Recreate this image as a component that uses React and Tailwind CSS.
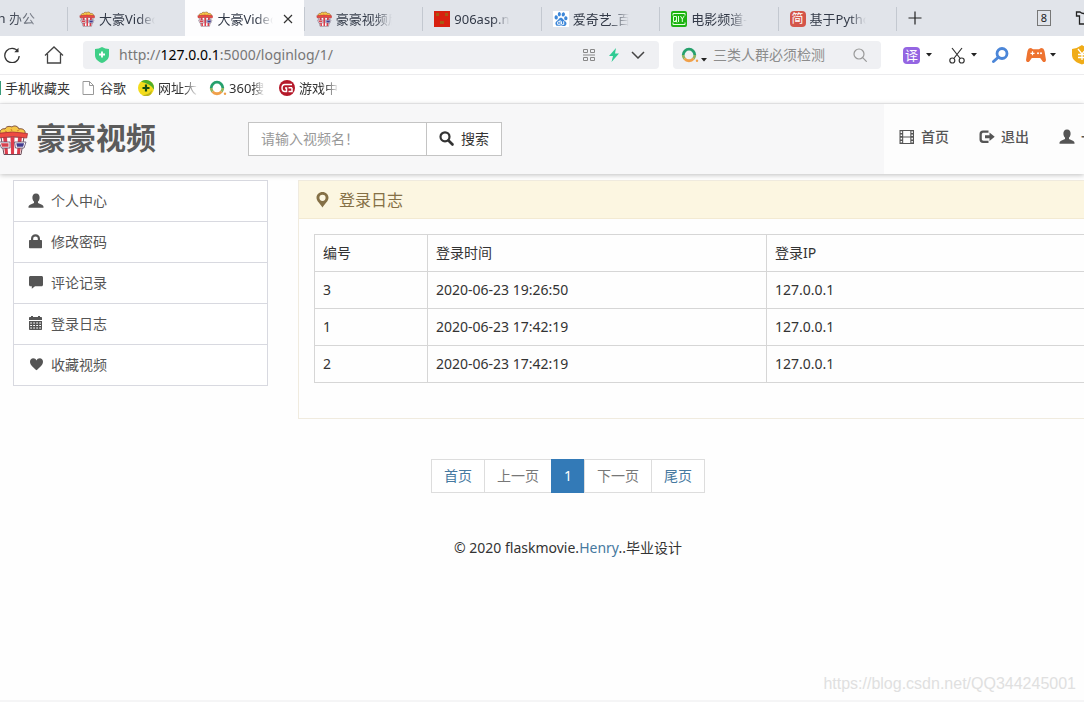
import React from "react";
import { SiBaidu } from "react-icons/si";

function Popcorn({ className }) {
  return (
    <svg viewBox="0 0 32 32" className={className} aria-hidden="true">
      <path d="M4 10C3 6 7 4 9 5c1-3 5-3 7-2 2-2 6-1 7 2 3-1 7 1 6 5z" fill="#f5c648" stroke="#7c4a35" strokeWidth="1" />
      <path d="M9 7l2 1M15 5l1 2M21 7l2-1M13 9l2-1" stroke="#d08b2c" strokeWidth="1.2" fill="none" />
      <path d="M5 13h23l-3 17.5H8z" fill="#fff" stroke="#6b4b58" strokeWidth="1" />
      <path d="M7 13h4l1 17H9zM14.500 13h4l-.5 17h-3zM22 13h4l-2 17h-3z" fill="#dc3d4c" />
      <path d="M1.500 9.500q15-3 30 0l-.8 4.500q-14-3-28.400 0z" fill="#ee4a42" stroke="#a3343a" strokeWidth=".8" />
      <path d="M3 18h11v6H5.500zM18.500 18H30l-2 6h-8.500z" fill="#fff" stroke="#5a4a68" strokeWidth=".8" />
      <path d="M5 19.200h7.500v3.500H6z" fill="#d6414e" />
      <path d="M20.300 19.200h7.800l-1 3.600H21z" fill="#3f3a8c" />
    </svg>
  );
}

const User = () => (
  <svg viewBox="0 0 16 16" className="size-4 shrink-0" fill="currentColor" aria-hidden="true">
    <path d="M8 .5C5.500.5 4.200 2.400 4.400 5c.1 1.400.7 2.800 1.600 3.600v1.400L2.100 11.700C1 12.200.5 12.900.5 14v.8h15V14c0-1.100-.5-1.800-1.600-2.300L10 10V8.600c.9-.8 1.500-2.200 1.600-3.600C11.800 2.400 10.500.5 8 .5z" />
  </svg>
);
const Lock = () => (
  <svg viewBox="0 0 16 16" className="size-4 shrink-0" fill="currentColor" aria-hidden="true">
    <path fillRule="evenodd" d="M3 6V4.700C3 2.100 5 .3 7.500.3S12 2.100 12 4.700V6h1.300c.4 0 .7.300.7.700v6.800c0 .4-.3.7-.7.700H1.700c-.4 0-.7-.3-.7-.7V6.700C1 6.300 1.300 6 1.700 6zm2.200 0h4.600V4.700C9.800 3.300 8.800 2.500 7.500 2.500s-2.300.8-2.300 2.200z" />
  </svg>
);
const Comment = () => (
  <svg viewBox="0 0 16 16" className="size-4 shrink-0" fill="currentColor" aria-hidden="true">
    <path d="M2.500 1h11c.9 0 1.500.6 1.500 1.500v7.200c0 .9-.6 1.500-1.500 1.500H7L3.800 13.800v-2.600H2.500C1.600 11.200 1 10.600 1 9.700V2.500C1 1.600 1.600 1 2.500 1z" />
  </svg>
);
const Calendar = () => (
  <svg viewBox="0 0 16 16" className="size-4 shrink-0" fill="currentColor" aria-hidden="true">
    <path fillRule="evenodd" d="M1 4V1.800C1 1.300 1.300 1 1.800 1H3V0h2v1h5V0h2v1h1.200c.5 0 .8.300.8.800V4zM1 5h13v8.200c0 .5-.3.800-.8.800H1.800c-.5 0-.8-.3-.8-.8zm1.200 1.400v1.100h1.800V6.400zm3 0v1.100H7V6.400zm3 0v1.100H10V6.400zm3 0v1.100h1.800V6.400zm-9 2.600v1.100h1.800V9zm3 0v1.100H7V9zm3 0v1.100H10V9zm3 0v1.100h1.800V9zm-9 2.500v1.100h1.800v-1.100zm3 0v1.100H7v-1.100zm3 0v1.100H10v-1.100zm3 0v1.100h1.800v-1.100z" />
  </svg>
);
const Heart = () => (
  <svg viewBox="0 0 16 16" className="size-4 shrink-0" fill="currentColor" aria-hidden="true">
    <path d="M8.500 13.300C5 10.100 2 7.700 2 4.700 2 2.600 3.500 1.300 5.200 1.300c1.500 0 2.700.9 3.300 2.200.6-1.300 1.800-2.200 3.300-2.200C13.500 1.300 15 2.600 15 4.700c0 3-3 5.400-6.500 8.600z" />
  </svg>
);
const Pin = () => (
  <svg viewBox="0 0 16 16" className="size-4 shrink-0" fill="currentColor" aria-hidden="true">
    <path fillRule="evenodd" d="M7.500 0c3.400 0 6 2.500 6 5.800 0 3.500-4 6.200-6 9.700-2-3.500-6-6.200-6-9.700C1.500 2.500 4.100 0 7.500 0zm0 2.700a3.100 3.100 0 1 0 0 6.200 3.100 3.100 0 0 0 0-6.200z" />
  </svg>
);
const Film = () => (
  <svg viewBox="0 0 16 16" className="size-4 shrink-0" fill="currentColor" aria-hidden="true">
    <path fillRule="evenodd" d="M.5 1h14.500v14H.5zM4.200 2.100v5.300h7.100V2.100zm0 6.500v5.300h7.100V8.600zM1.600 2.300v1.600h1.500V2.300zm0 3.200v1.600h1.500V5.500zm0 3.300v1.600h1.500V8.800zm0 3.200v1.600h1.500V12zM12.400 2.300v1.600h1.500V2.300zm0 3.200v1.600h1.500V5.500zm0 3.300v1.600h1.500V8.800zm0 3.200v1.600h1.500V12z" />
  </svg>
);
const Exit = () => (
  <svg viewBox="0 0 16 16" className="size-4 shrink-0" fill="currentColor" aria-hidden="true">
    <path d="M9.500 1.500H4C1.800 1.500.5 2.900.5 5v5.500C.5 12.700 1.800 14 4 14h5.500v-2.200H4.600c-1.200 0-1.800-.6-1.800-1.700V5.400c0-1.100.6-1.700 1.800-1.700h4.900z" />
    <path d="M10.500 3.400 15.700 7.700l-5.200 4.300V9.200H6v-3h4.500z" />
  </svg>
);
const Search = () => (
  <svg viewBox="0 0 16 16" className="size-4 shrink-0" fill="none" stroke="currentColor" aria-hidden="true">
    <circle cx="6" cy="5.800" r="4.500" strokeWidth="2.200" />
    <path d="M9.500 9.500l4 4" strokeWidth="2.600" strokeLinecap="round" />
  </svg>
);
const Caret = () => (
  <svg viewBox="0 0 6 4" className="h-1 w-1.5 shrink-0" aria-hidden="true">
    <path d="M0 0h6L3 3.600z" fill="#222" />
  </svg>
);
const Ring = ({ className }) => (
  <svg viewBox="0 0 18 16" className={className} fill="none" strokeWidth="2.800" aria-hidden="true">
    <path d="M2.200 8A5.800 5.800 0 0 1 13.800 8" stroke="#25a06c" />
    <path d="M13.800 8A5.800 5.800 0 0 1 12.500 11.600M2.200 8A5.800 5.800 0 0 0 3.500 11.600" stroke="#8fb560" />
    <path d="M12.500 11.600A5.800 5.800 0 0 1 3.500 11.600" stroke="#f0a04a" />
    <circle cx="16" cy="13.800" r="1.200" fill="#f0a04a" stroke="none" />
  </svg>
);

const RedMask = () => (
  <svg viewBox="0 0 16 16" className="size-4" aria-hidden="true">
    <path d="M0 0h16v16H0z" fill="#d8200f" />
    <path d="M2 2h3v3H2zM11 2h3v3h-3zM6 10h4v3H6z" fill="#a65a12" />
  </svg>
);
const Paw = () => (
  <span className="flex size-4 items-center justify-center bg-white">
    <SiBaidu className="size-3.5 text-[#3c86d8]" aria-hidden="true" />
  </span>
);
const Qiyi = () => (
  <svg viewBox="0 0 16 16" className="size-4" aria-hidden="true">
    <rect width="16" height="16" rx="2" fill="#1db312" />
    <path d="M2 4.500v-2h12v2M2 11.500v2h12v-2M2.500 5.500h3v5h-3zM4.500 9l1.500 2.500M7.500 5v6M9.500 5l1.800 3 1.800-3M11.300 8v3" fill="none" stroke="#e4ffe0" strokeWidth="1" />
  </svg>
);
const Jian = () => (
  <span className="flex size-4 items-center justify-center rounded-sm bg-[#d4554a] text-xs leading-4 text-white">简</span>
);

const tabs = [
  { title: "大豪Video", icon: <Popcorn className="size-4" /> },
  { title: "大豪Video", icon: <Popcorn className="size-4" />, active: true },
  { title: "豪豪视频后", icon: <Popcorn className="size-4" /> },
  { title: "906asp.ne", icon: <RedMask /> },
  { title: "爱奇艺_百度", icon: <Paw /> },
  { title: "电影频道-电", icon: <Qiyi /> },
  { title: "基于Python", icon: <Jian /> },
];

function TabStrip() {
  return (
    <div className="flex h-9 items-stretch overflow-hidden bg-[#e1e4ea] text-[13px] text-[#333a48]">
      <div className="flex w-[67px] shrink-0 items-center justify-end pr-8 whitespace-nowrap">
        <span className="[mask-image:linear-gradient(to_right,#000_60%,#0008)]">Python 办公</span>
      </div>
      <div className="grid w-[829px] shrink-0 grid-cols-7">
        {tabs.map((t, i) => (
          <button
            key={i}
            className={
              t.active
                ? "flex min-w-0 items-center bg-[#fdfdfe] pt-0.5 pl-3 text-left"
                : "flex min-w-0 items-center bg-[linear-gradient(#c3c8d0,#c3c8d0)] bg-[length:1px_24px] bg-[position:0_7px] bg-no-repeat pt-0.5 pl-3 text-left"
            }
          >
            <span className="shrink-0">{t.icon}</span>
            <span className="ml-1 w-14 shrink-0 overflow-hidden whitespace-nowrap [mask-image:linear-gradient(to_right,#000_70%,transparent)]">
              {t.title}
            </span>
            {t.active && (
              <svg viewBox="0 0 10 10" className="ml-2.5 size-2.5" stroke="#333" strokeWidth="1.200" aria-hidden="true">
                <path d="M1 1l8 8M9 1L1 9" />
              </svg>
            )}
          </button>
        ))}
      </div>
      <div className="flex min-w-0 flex-1 items-center bg-[linear-gradient(#c3c8d0,#c3c8d0)] bg-[length:1px_24px] bg-[position:0_7px] bg-no-repeat pl-3">
        <button aria-label="新标签页">
          <svg viewBox="0 0 14 14" className="size-3.5" stroke="#222" strokeWidth="1.200" aria-hidden="true">
            <path d="M7 0.500v13M.5 7h13" />
          </svg>
        </button>
        <button className="mr-6 ml-auto flex h-4 w-3.5 items-center justify-center border border-[#777] text-[11px] leading-3 text-[#222]">8</button>
        <span className="w-[9px] shrink-0 overflow-hidden">
          <svg viewBox="0 0 16 14" className="h-3.5 w-4" fill="none" stroke="#222" strokeWidth="1.300" aria-hidden="true">
            <path d="M5 1H1.500v4H4.500v8h8V5h3V1H12Q8.500 4 5 1z" />
          </svg>
        </span>
      </div>
    </div>
  );
}

function Toolbar() {
  return (
    <div className="flex h-[39px] items-center overflow-hidden border-b border-[#ececee] bg-white">
      <button aria-label="刷新" className="ml-1 shrink-0">
        <svg viewBox="0 0 16 16" className="size-4" fill="none" stroke="#333" strokeWidth="1.300" aria-hidden="true">
          <path d="M14 4.500A7.200 7.200 0 1 0 15.200 9" />
          <path d="M14.500.8v4.400h-4.200z" fill="#333" stroke="none" />
        </svg>
      </button>
      <button aria-label="主页" className="ml-6 shrink-0">
        <svg viewBox="0 0 20 18" className="h-[18px] w-5" fill="none" stroke="#444" strokeWidth="1.300" aria-hidden="true">
          <path d="M1 9.500L10 1l9 8.500M3.500 8v9h13V8" />
        </svg>
      </button>
      <div className="ml-[19px] flex h-7 min-w-0 flex-1 items-center rounded bg-[#eff0f3] pr-3.5 pl-3">
        <svg viewBox="0 0 14 16" className="h-4 w-3.5 shrink-0" aria-hidden="true">
          <path d="M0 2q4 0 7-2 3 2 7 2v6c0 4-3 6.500-7 8-4-1.500-7-4-7-8z" fill="#3fcf87" />
          <path d="M7 4.500v6M4 7.500h6" stroke="#fff" strokeWidth="1.800" />
        </svg>
        <div className="ml-2.5 flex-1 truncate text-sm text-[#777]">
          http://<span className="text-black">127.0.0.1</span>:5000/loginlog/1/
        </div>
        <svg viewBox="0 0 12 12" className="size-3 shrink-0" fill="none" stroke="#888" aria-hidden="true">
          <path d="M.5.5h4v3h-4zM7.500.5h4v3h-4zM.5 8.500h4v3h-4zM7.500 8.500h4v3h-4zM0 6h12" />
        </svg>
        <svg viewBox="0 0 10 14" className="ml-3.5 h-3.5 w-2.5 shrink-0" aria-hidden="true">
          <path d="M7 0L0 8h4l-1.500 6L10 5.500H6z" fill="#2fcb93" />
        </svg>
        <svg viewBox="0 0 14 8" className="ml-3 h-2 w-3.5 shrink-0" fill="none" stroke="#444" strokeWidth="1.500" aria-hidden="true">
          <path d="M1 1l6 6 6-6" />
        </svg>
      </div>
      <div className="ml-3.5 flex h-7 w-52 shrink-0 items-center rounded bg-[#eff0f3] pr-3.5 pl-2">
        <Ring className="h-4 w-[18px] shrink-0" />
        <span className="ml-0.5 flex pt-2.5"><Caret /></span>
        <input
          aria-label="搜索"
          placeholder="三类人群必须检测"
          className="ml-1.5 w-0 min-w-0 flex-1 bg-transparent text-sm outline-none placeholder:text-[#8c8c8c]"
        />
        <svg viewBox="0 0 14 14" className="size-3.5 shrink-0" fill="none" stroke="#999" strokeWidth="1.200" aria-hidden="true">
          <circle cx="6" cy="6" r="5" />
          <path d="M9.700 9.700l4 4" />
        </svg>
      </div>
      <div className="flex w-[203px] shrink-0 items-center overflow-hidden pl-[22px]">
        <span className="flex size-[17px] shrink-0 items-center justify-center rounded-sm bg-[#9465e2] text-[13px] leading-4 text-white">译</span>
        <span className="ml-1.5 flex"><Caret /></span>
        <svg viewBox="0 0 16 18" className="ml-[17px] h-[18px] w-4 shrink-0" fill="none" stroke="#333" strokeWidth="1.200" aria-hidden="true">
          <circle cx="3.300" cy="14.500" r="2.500" />
          <circle cx="12.700" cy="14.500" r="2.500" />
          <path d="M3 2l8.200 10.500M13 2L4.800 12.500" />
        </svg>
        <span className="ml-1.5 flex"><Caret /></span>
        <svg viewBox="0 0 18 18" className="ml-[14px] size-[18px] shrink-0" fill="none" aria-hidden="true">
          <circle cx="11" cy="7.500" r="5" stroke="#4b86d8" strokeWidth="2.800" />
          <path d="M7 11.500l-4.500 4" stroke="#4b86d8" strokeWidth="3" strokeLinecap="round" />
        </svg>
        <svg viewBox="0 0 20 16" className="ml-[17px] h-4 w-5 shrink-0" aria-hidden="true">
          <path d="M5 1l2 1.200h6L15 1c2 0 3 1 3.600 3.500l1.300 8c.4 2.600-2 3.400-3.400 1.700L14.200 11H5.800l-2.300 3.200C2.100 15.900-.3 15.100.1 12.500l1.300-8C2 2 3 1 5 1z" fill="#ee7330" />
          <path d="M6.500 4.300v4M4.500 6.300h4" stroke="#fff" strokeWidth="1.200" />
          <circle cx="12" cy="6.300" r="1" fill="#fff" />
          <circle cx="15" cy="6.300" r="1" fill="#fff" />
        </svg>
        <span className="ml-1 flex"><Caret /></span>
        <svg viewBox="0 0 20 20" className="ml-4 size-5 shrink-0" aria-hidden="true">
          <path d="M0 4q6-1 10-4 4 3 10 4v6c0 5-5 8-10 9.500C5 18 0 15 0 10z" fill="#f0ac18" />
          <path d="M6 4l4 5 4-5M6 9.500h8M6 12.500h8M10 9v6" stroke="#fff" strokeWidth="1.300" fill="none" />
        </svg>
      </div>
    </div>
  );
}

function Bookmarks() {
  const label = "overflow-hidden whitespace-nowrap [mask-image:linear-gradient(to_right,#000_65%,transparent)]";
  return (
    <div className="flex h-[29px] items-center overflow-hidden border-b border-[#f0f0f2] bg-white pb-0.5 text-[13px] text-[#333]">
      <span className="h-3.5 w-px shrink-0 bg-[#3a9b7a]" />
      <a href="#mobile" className="ml-1 shrink-0">手机收藏夹</a>
      <a href="#google" className="ml-3 flex shrink-0 items-center">
        <svg viewBox="0 0 12 14" className="mr-1.5 h-3.5 w-3" fill="none" stroke="#999" aria-hidden="true">
          <path d="M1 .5h6.500l4 4v9H1zM7.500.5v4h4" />
        </svg>
        谷歌
      </a>
      <a href="#sites" className="ml-3 flex shrink-0 items-center">
        <svg viewBox="0 0 16 16" className="mr-1 size-4" aria-hidden="true">
          <circle cx="8" cy="8" r="8" fill="#f3dc1c" />
          <path d="M3 1.800A8 8 0 0 1 15.800 9.500C13 4.500 8 3 3 1.800z" fill="#4fae2c" />
          <path d="M13 14.200A8 8 0 0 1 4 15c5 0 8-2 10-5z" fill="#b9b320" />
          <path d="M8 4.500v7M4.500 8h7" stroke="#174d14" strokeWidth="2.200" />
        </svg>
        <span className={label + " w-10"}>网址大全</span>
      </a>
      <a href="#so" className="ml-[11px] flex shrink-0 items-center">
        <Ring className="mr-0.5 h-4 w-[18px]" />
        <span className={label + " w-9"}>360搜索</span>
      </a>
      <a href="#games" className="ml-3.5 flex shrink-0 items-center">
        <svg viewBox="0 0 16 16" className="mr-1 size-4" aria-hidden="true">
          <circle cx="8" cy="8" r="8" fill="#b5192a" />
          <path d="M13 4.500H6Q3 4.500 3 8t3 3.500h1.500V8H6M13 7.700H9.500M13 7.700v3.800H9.500" fill="none" stroke="#fff" strokeWidth="1.500" />
        </svg>
        <span className={label + " w-10"}>游戏中心</span>
      </a>
    </div>
  );
}

function SiteHeader() {
  return (
    <header className="flex h-[70px] items-stretch overflow-hidden bg-[#f7f7f8]">
      <div className="flex min-w-0 flex-1 items-center">
        <a href="#home" className="flex w-[248px] shrink-0 items-center pb-0.5 text-[30px] leading-9 font-bold text-[#5b5b5b]">
          <span className="mr-2 -ml-1 shrink-0 pt-1"><Popcorn className="size-8" /></span>
          豪豪视频
        </a>
        <form className="flex h-[34px] w-[254px]" onSubmit={(e) => e.preventDefault()}>
          <input
            aria-label="视频名"
            placeholder="请输入视频名！"
            lang="zh-CN"
            className="w-0 min-w-0 flex-1 border border-[#c4c4c4] bg-white px-3 text-sm outline-none placeholder:text-[#999]"
          />
          <button className="-ml-px flex w-[76px] shrink-0 items-center gap-1.5 border border-[#c4c4c4] bg-white pl-3 text-sm text-[#333]">
            <Search />
            搜索
          </button>
        </form>
      </div>
      <nav className="flex w-[200px] shrink-0 items-center overflow-hidden bg-[#fdfdfd] pb-1 pl-[15px] text-sm font-medium whitespace-nowrap text-[#555]">
        <a href="#home" className="flex shrink-0 items-center gap-1.5"><Film />首页</a>
        <a href="#logout" className="ml-[30px] flex shrink-0 items-center gap-1.5"><Exit />退出</a>
        <a href="#member" className="ml-[30px] flex shrink-0 items-center gap-1.5"><User />一</a>
      </nav>
    </header>
  );
}

const menu = [
  ["个人中心", User],
  ["修改密码", Lock],
  ["评论记录", Comment],
  ["登录日志", Calendar],
  ["收藏视频", Heart],
];

const logs = [
  ["3", "2020-06-23 19:26:50", "127.0.0.1"],
  ["1", "2020-06-23 17:42:19", "127.0.0.1"],
  ["2", "2020-06-23 17:42:19", "127.0.0.1"],
];

const cell = "h-[37px] border border-r-0 border-[#d6d6d6] px-2 py-0 text-left font-normal";

export default function App() {
  return (
    <div className="flex min-h-screen flex-col overflow-hidden bg-[#fefefe] font-['Noto_Sans','Noto_Sans_CJK_SC',sans-serif] text-sm text-[#333]">
      <TabStrip />
      <Toolbar />
      <Bookmarks />
      <div className="z-10 shadow-[0_1px_5px_#00000040]">
        <SiteHeader />
      </div>

      <div className="mt-1.5 flex items-start pl-[13px]">
        <ul className="w-[255px] shrink-0 border border-[#d8d9e0] bg-white">
          {menu.map(([text, Icon], i) => (
            <li key={text} className={i ? "border-t border-[#d8d9e0]" : ""}>
              <a href="#menu" className="flex h-10 items-center gap-[7px] pl-3.5 text-[#555]">
                <Icon />
                {text}
              </a>
            </li>
          ))}
        </ul>
        <main className="ml-[30px] min-w-0 flex-1 border border-r-0 border-[#f0ebdf] pb-[35px]">
          <h1 className="flex h-[38px] items-center gap-2 border-b border-[#f3ead2] bg-[#fcf6e1] pl-4 text-base text-[#857046]">
            <Pin />
            登录日志
          </h1>
          <table className="mt-[15px] ml-[15px] w-[calc(100%-15px)] table-fixed border-collapse">
            <colgroup>
              <col className="w-[113px]" />
              <col className="w-[339px]" />
              <col />
            </colgroup>
            <thead>
              <tr>
                <th className={cell}>编号</th>
                <th className={cell}>登录时间</th>
                <th className={cell}>登录IP</th>
              </tr>
            </thead>
            <tbody>
              {logs.map((row) => (
                <tr key={row[0]}>
                  {row.map((v, i) => (
                    <td key={i} className={cell}>{v}</td>
                  ))}
                </tr>
              ))}
            </tbody>
          </table>
        </main>
      </div>

      <div className="flex flex-col items-center pl-[52px]">
        <nav className="mt-10 flex h-[34px] items-stretch text-[#4679a0]">
          <a href="#first" className="flex items-center border border-[#ddd] bg-white px-3">首页</a>
          <a href="#prev" className="-ml-px flex items-center border border-[#ddd] bg-white px-3 text-[#777]">上一页</a>
          <a href="#1" className="-ml-px flex items-center border border-[#337ab7] bg-[#337ab7] px-3 text-white">1</a>
          <a href="#next" className="-ml-px flex items-center border border-[#ddd] bg-white px-3 text-[#777]">下一页</a>
          <a href="#last" className="-ml-px flex items-center border border-[#ddd] bg-white px-3">尾页</a>
        </nav>
        <footer className="mt-[45px] leading-5">
          © 2020 flaskmovie.<a href="#henry" className="text-[#4679a0]">Henry</a>..毕业设计
        </footer>
      </div>

      <div className="mt-auto border-b-2 border-[#f5f5f6] pr-2 pb-1 text-right font-['Liberation_Sans',sans-serif] text-base text-[#e0e0e0]">
        https://blog.csdn.net/QQ344245001
      </div>
    </div>
  );
}
